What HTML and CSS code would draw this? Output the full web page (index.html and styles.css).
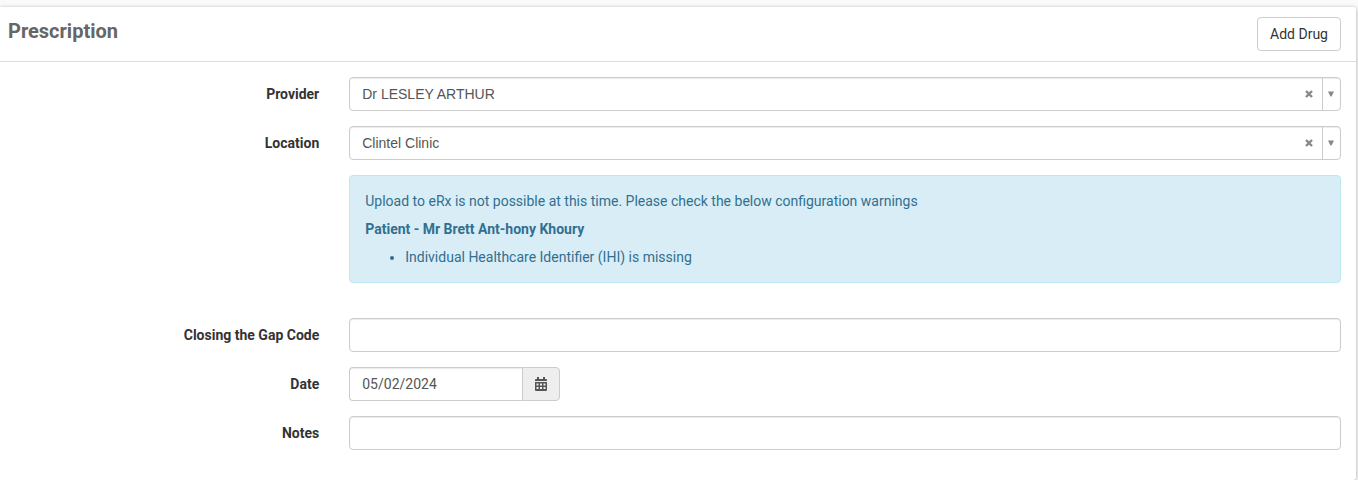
FILE: index.html
```html
<!DOCTYPE html>
<html lang="en">
<head>
<meta charset="utf-8">
<title>Prescription</title>
<link rel="stylesheet" href="styles.css">
</head>
<body>
<main class="panel">
  <header class="panel-head">
    <h1 class="title">Prescription</h1>
    <button class="btn" type="button">Add Drug</button>
  </header>
  <form class="form">
    <div class="row">
      <label class="label" for="provider">Provider</label>
      <div class="combo">
        <select class="combo-select" id="provider"><option>Dr LESLEY ARTHUR</option></select>
        <button class="combo-clear" type="button" aria-label="Clear provider"><svg width="8" height="8" viewBox="0 0 8 8"><path d="M1 1L7 7M7 1L1 7" stroke="#888" stroke-width="2.4"/></svg></button>
        <span class="combo-arrow"><svg width="7" height="6" viewBox="0 0 7 6"><path d="M0 0.5H6L3.5 5.5H2.5Z" fill="#888"/></svg></span>
      </div>
    </div>
    <div class="row">
      <label class="label" for="location">Location</label>
      <div class="combo">
        <select class="combo-select" id="location"><option>Clintel Clinic</option></select>
        <button class="combo-clear" type="button" aria-label="Clear location"><svg width="8" height="8" viewBox="0 0 8 8"><path d="M1 1L7 7M7 1L1 7" stroke="#888" stroke-width="2.4"/></svg></button>
        <span class="combo-arrow"><svg width="7" height="6" viewBox="0 0 7 6"><path d="M0 0.5H6L3.5 5.5H2.5Z" fill="#888"/></svg></span>
      </div>
    </div>
    <div class="row row-alert">
      <div class="alert" role="status">
        <p class="alert-text">Upload to eRx is not possible at this time. Please check the below configuration warnings</p>
        <p class="alert-text alert-strong">Patient - Mr Brett Ant-hony Khoury</p>
        <ul class="alert-list"><li>Individual Healthcare Identifier (IHI) is missing</li></ul>
      </div>
    </div>
    <div class="row">
      <label class="label" for="gap">Closing the Gap Code</label>
      <input class="input" id="gap" type="text">
    </div>
    <div class="row">
      <label class="label" for="date">Date</label>
      <div class="date-group">
        <input class="input date-input" id="date" type="text" value="05/02/2024">
        <button class="date-btn" type="button" aria-label="Open calendar"><svg width="12" height="14" viewBox="0 0 12 14"><path fill="#555" fill-rule="evenodd" d="M2 0H4V2H8V0H10V2H11Q12 2 12 3V4H0V3Q0 2 1 2H2ZM0 5H12V13Q12 14 11 14H1Q0 14 0 13ZM1.500 6.500V8.500H3.500V6.500ZM5 6.500V8.500H7V6.500ZM8.500 6.500V8.500H10.500V6.500ZM1.500 10V12H3.500V10ZM5 10V12H7V10ZM8.500 10V12H10.500V10Z"/></svg></button>
      </div>
    </div>
    <div class="row">
      <label class="label" for="notes">Notes</label>
      <input class="input" id="notes" type="text">
    </div>
  </form>
</main>
</body>
</html>
```
FILE: styles.css
```css
* { box-sizing: border-box; }

body {
  margin: 0;
  padding: 7px 2px 0 0;
  background: #fafafa;
  color: #333;
  font: 14px/20px Roboto, sans-serif;
}

.panel {
  min-height: calc(100vh - 7px);
  background: #fff;
  border-radius: 0 3px 3px 0;
  box-shadow: 0 1px 4px rgba(0, 0, 0, 0.35);
}

.panel-head {
  display: flex;
  align-items: center;
  justify-content: space-between;
  padding: 10px 15px 10px 8px;
  border-bottom: 1px solid #ddd;
}

.title {
  margin: 0 0 6px;
  color: #666;
  font-size: 20px;
  line-height: 24px;
  font-weight: 700;
}

.btn {
  height: 34px;
  padding: 0 12px;
  border: 1px solid #ccc;
  border-radius: 4px;
  background: #fff;
  color: #333;
  font: inherit;
}

.form {
  display: flex;
  flex-direction: column;
  gap: 15px;
  padding: 15px 15px 30px 0;
}

.row {
  display: grid;
  grid-template-columns: calc(25% - 16px) minmax(0, 1fr);
  column-gap: 30px;
  align-items: center;
}

.row-alert { margin-bottom: 20px; }

.label {
  text-align: right;
  font-weight: 700;
}

.input,
.combo {
  width: 100%;
  height: 34px;
  border: 1px solid #ccc;
  border-radius: 4px;
  background: #fff;
  box-shadow: inset 0 1px 1px rgba(0, 0, 0, 0.08);
  color: #555;
}

.input {
  padding: 6px 12px;
  font: inherit;
}

.combo {
  display: flex;
  align-items: stretch;
}

.combo-select {
  flex: 1;
  min-width: 0;
  padding: 0 12px;
  border: 0;
  background: transparent;
  appearance: none;
  color: #555;
  font: 14px/20px "Liberation Sans", Arial, sans-serif;
}

.combo-clear,
.combo-arrow {
  display: flex;
  align-items: center;
  justify-content: center;
  padding: 0;
  border: 0;
  background: transparent;
}

.combo-clear { width: 26px; }

.combo-arrow {
  width: 18px;
  border-left: 1px solid #ccc;
}

.alert {
  grid-column: 2;
  padding: 15px;
  border: 1px solid #bce8f1;
  border-radius: 4px;
  background: #d9edf7;
  color: #31708f;
}

.alert-text { margin: 0 0 8px; }

.alert-strong { font-weight: 700; }

.alert-list {
  margin: 0;
  padding-left: 40px;
}

.date-group { display: flex; }

.date-input {
  width: 173px;
  border-right: 0;
  border-radius: 4px 0 0 4px;
}

.date-btn {
  display: flex;
  align-items: center;
  justify-content: center;
  width: 38px;
  padding: 0;
  border: 1px solid #ccc;
  border-radius: 0 4px 4px 0;
  background: #eee;
}
```
